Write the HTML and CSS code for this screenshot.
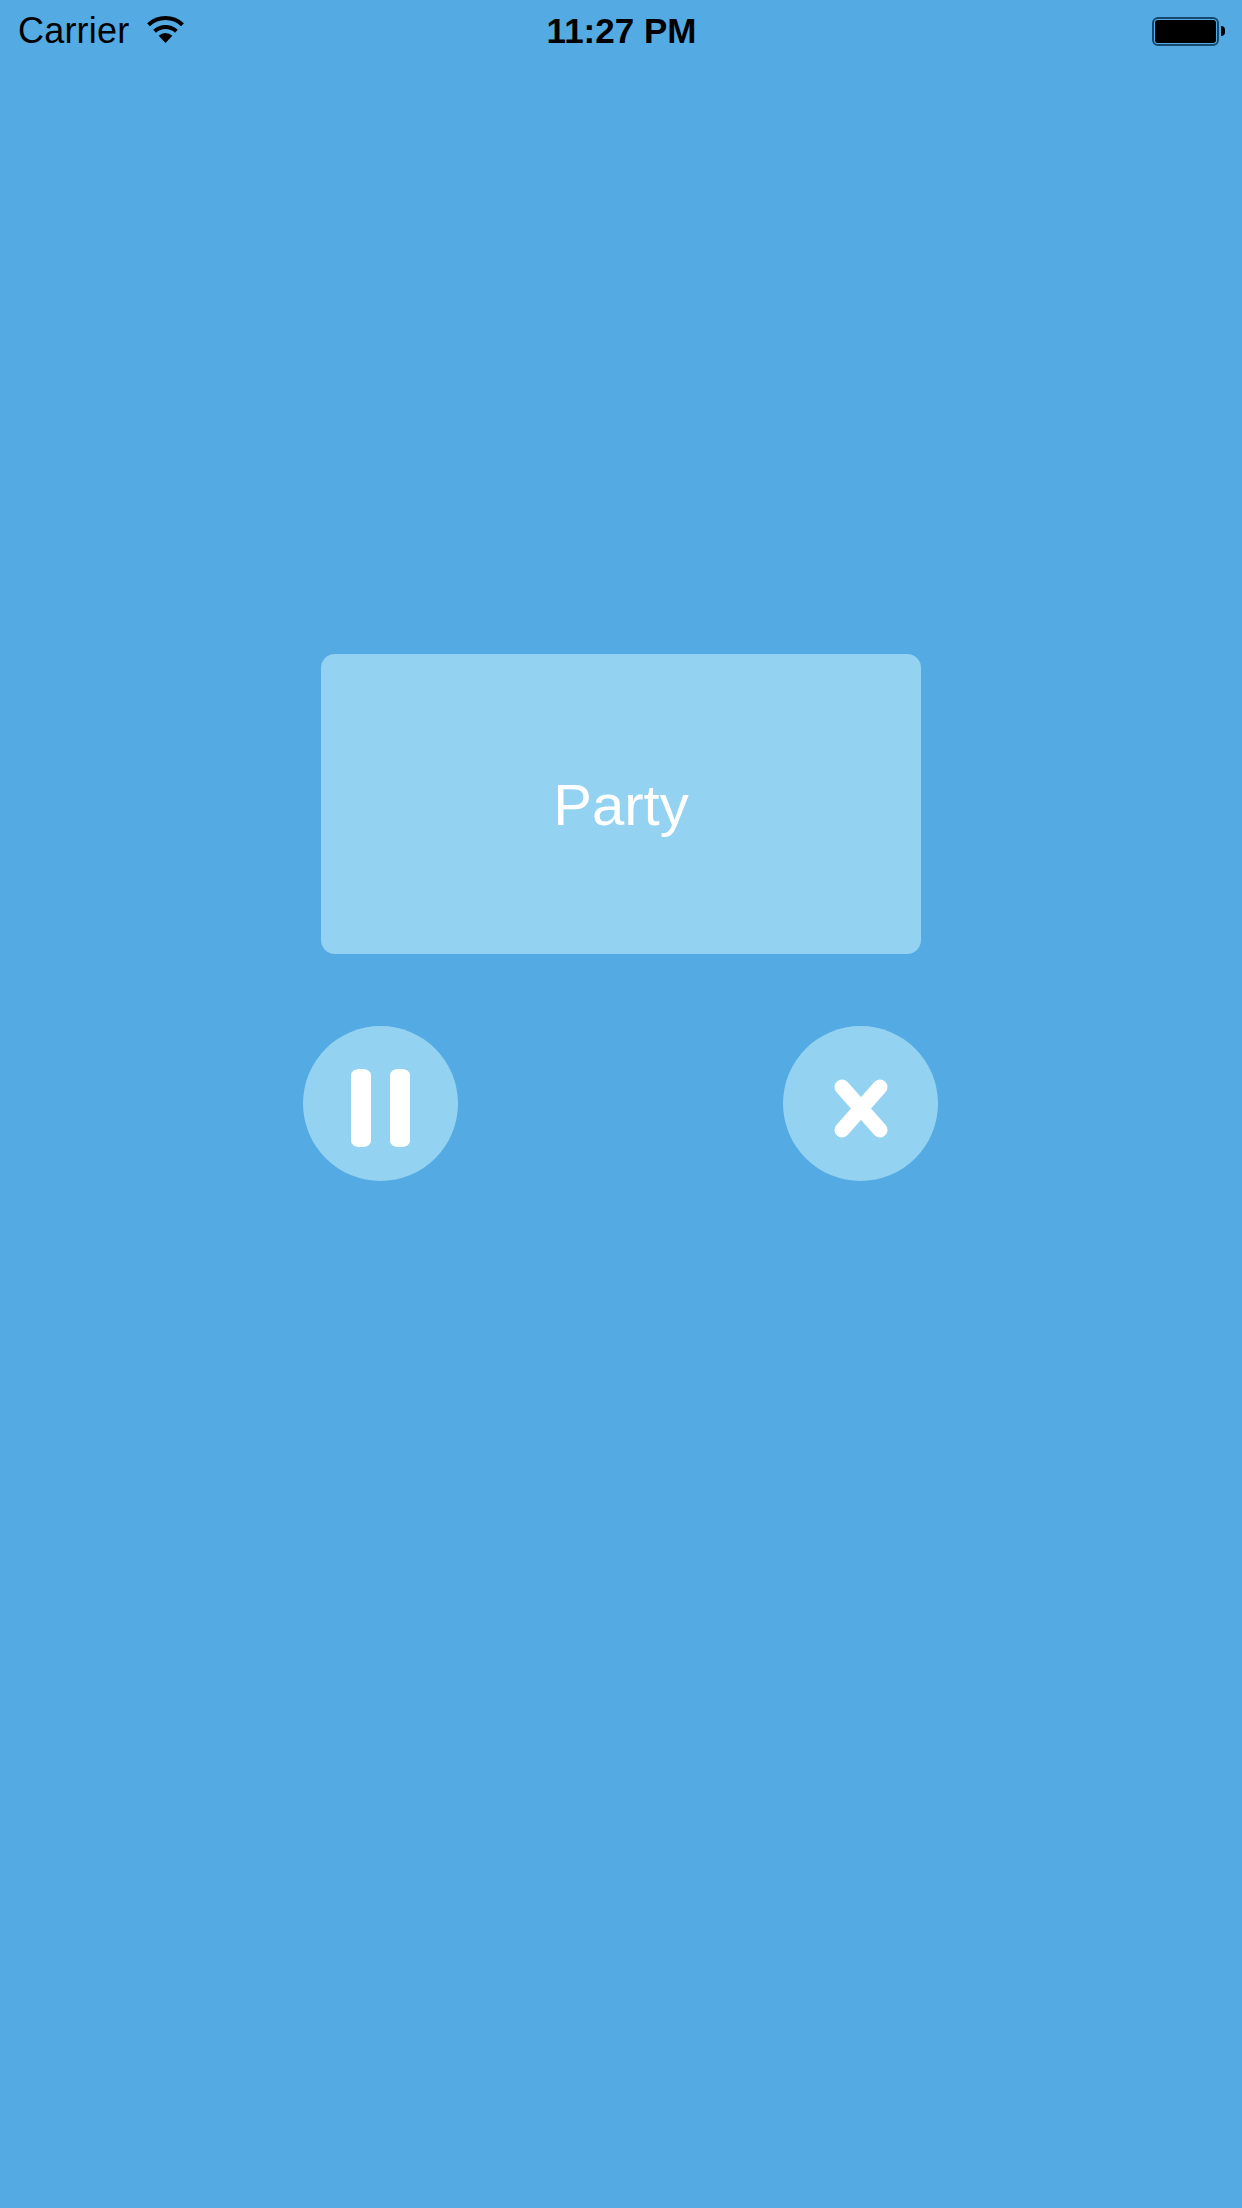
FILE: index.html

```html
<!DOCTYPE html>
<html lang="en">
<head>
  <meta charset="UTF-8" />
  <meta name="viewport" content="width=device-width, initial-scale=1" />
  <title>Party</title>
  <link rel="stylesheet" href="styles.css">
</head>
<body>
  <div class="status-bar">
    <div class="status-left">
      <span class="carrier">Carrier</span>
      <svg class="wifi" width="38" height="28" viewBox="0 0 38 28">
        <path d="M1.5 8.7A25 25 0 0 1 35.5 8.7" fill="none" stroke="#000" stroke-width="4" />
        <path d="M7.6 15.3A16 16 0 0 1 29.4 15.3" fill="none" stroke="#000" stroke-width="4" />
        <path d="M18.5 27L11.7 19.7A10 10 0 0 1 25.3 19.7Z" fill="#000" />
      </svg>
    </div>
    <div class="time">11:27 PM</div>
    <div class="status-right">
      <div class="battery"><div class="battery-level"></div></div>
      <div class="battery-nub"></div>
    </div>
  </div>

  <div class="stage">
    <div class="card">Party</div>
    <div class="controls">
      <div class="round-btn">
        <div class="pause-bar"></div>
        <div class="pause-bar"></div>
      </div>
      <div class="round-btn">
        <svg width="54" height="59" viewBox="0 0 54 59">
          <path d="M8 8L46 51M46 8L8 51" fill="none" stroke="#fff" stroke-width="15" stroke-linecap="round" />
        </svg>
      </div>
    </div>
  </div>
</body>
</html>
```

FILE: styles.css

```css
html, body {
  height: 100%;
}
body {
  font-family: "Liberation Sans", Arial, sans-serif;
  background: #54aae2;
  margin: 0;
  padding: 0;
  overflow: hidden;
}
.status-bar {
  display: grid;
  grid-template-columns: 1fr auto 1fr;
  align-items: center;
  height: 60px;
  box-sizing: border-box;
  padding: 2px 17px 0 18px;
  color: #000;
}
.status-left {
  display: flex;
  align-items: center;
  gap: 18px;
}
.carrier {
  font-size: 36px;
  letter-spacing: 0.2px;
}
.wifi {
  margin-top: -3px;
}
.time {
  font-size: 35px;
  font-weight: bold;
}
.status-right {
  display: flex;
  justify-content: flex-end;
  align-items: center;
  gap: 2px;
}
.battery {
  width: 67px;
  height: 29px;
  box-sizing: border-box;
  padding: 1px;
  border: 2px solid #17496e;
  border-radius: 6px;
}
.battery-level {
  height: 100%;
  background: #000;
  border-radius: 3px;
}
.battery-nub {
  width: 4px;
  height: 10px;
  background: #000;
  border-radius: 0 5px 5px 0;
}
.stage {
  padding-top: 594px;
}
.card {
  display: flex;
  align-items: center;
  justify-content: center;
  width: 600px;
  height: 300px;
  margin: 0 auto;
  background: #93d3f1;
  border-radius: 14px;
  color: white;
  font-size: 58px;
}
.controls {
  display: flex;
  gap: 325px;
  margin-top: 72px;
  padding-left: 303px;
}
.round-btn {
  display: flex;
  align-items: center;
  justify-content: center;
  gap: 19px;
  width: 155px;
  height: 155px;
  box-sizing: border-box;
  padding-top: 9px;
  background: #93d3f1;
  border-radius: 50%;
}
.pause-bar {
  width: 20px;
  height: 78px;
  background: white;
  border-radius: 8px / 6px;
}
```
